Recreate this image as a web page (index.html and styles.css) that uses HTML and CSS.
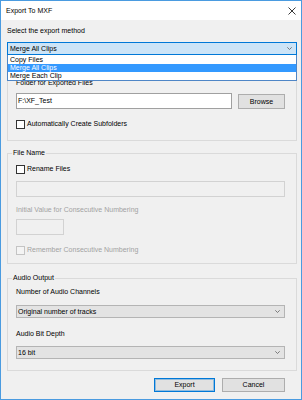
FILE: index.html
```html
<!DOCTYPE html>
<html>
<head>
<meta charset="utf-8">
<link rel="stylesheet" href="styles.css">
</head>
<body>
<div class="window">
  <div class="titlebar">
    <span class="title">Export To MXF</span>
    <svg class="close" viewBox="0 0 8 8"><path d="M0.5 0.5 L7.5 7.5 M7.5 0.5 L0.5 7.5" stroke="#222" stroke-width="0.9" fill="none"/></svg>
  </div>
  <div class="body">
    <div class="lbl">Select the export method</div>
    <div class="combo-wrap">
      <div class="combo active"><span>Merge All Clips</span><svg class="chev" viewBox="0 0 5 3"><path d="M0.3 0.3 L2.5 2.5 L4.7 0.3" stroke="#606060" stroke-width="0.8" fill="none"/></svg></div>
      <ul class="droplist">
        <li>Copy Files</li>
        <li class="sel">Merge All Clips</li>
        <li>Merge Each Clip</li>
      </ul>
    </div>
    <fieldset class="group g1">
      <div class="lbl">Folder for Exported Files</div>
      <div class="row folder-row">
        <div class="input folder-input">F:\XF_Test</div>
        <div class="btn browse">Browse</div>
      </div>
      <div class="check mt10"><span class="box"></span><span>Automatically Create Subfolders</span></div>
    </fieldset>
    <fieldset class="group g2">
      <legend>File Name</legend>
      <div class="check"><span class="box"></span><span>Rename Files</span></div>
      <div class="input disabled mt7"></div>
      <div class="lbl dim mt8">Initial Value for Consecutive Numbering</div>
      <div class="input disabled small mt4"></div>
      <div class="check dim mt10"><span class="box off"></span><span>Remember Consecutive Numbering</span></div>
    </fieldset>
    <fieldset class="group g3">
      <legend>Audio Output</legend>
      <div class="lbl">Number of Audio Channels</div>
      <div class="combo inner mt8"><span>Original number of tracks</span><svg class="chev" viewBox="0 0 5 3"><path d="M0.3 0.3 L2.5 2.5 L4.7 0.3" stroke="#606060" stroke-width="0.8" fill="none"/></svg></div>
      <div class="lbl mt11">Audio Bit Depth</div>
      <div class="combo inner mt7"><span>16 bit</span><svg class="chev" viewBox="0 0 5 3"><path d="M0.3 0.3 L2.5 2.5 L4.7 0.3" stroke="#606060" stroke-width="0.8" fill="none"/></svg></div>
    </fieldset>
    <div class="actions">
      <div class="btn export">Export</div>
      <div class="btn cancel">Cancel</div>
    </div>
  </div>
</div>
</body>
</html>
```
FILE: styles.css
```css
* { box-sizing: border-box; margin: 0; padding: 0; }
body { margin: 0; font-family: "Liberation Sans", Arial, sans-serif; font-size: 7px; color: #000; background: #fff; }
.window { width: 302px; height: 400px; border: 1px solid #4a9be0; background: #f0f0f0; display: flex; flex-direction: column; }
.titlebar { height: 19px; flex: none; background: #fff; display: flex; align-items: center; justify-content: space-between; padding: 0 5px; line-height: 10px; }
.close { width: 8px; height: 8px; display: block; }
.body { padding: 6px 4px 0 6px; }
.lbl { line-height: 10px; height: 10px; white-space: nowrap; }
.dim { color: #a2a2a2; }
.mt4 { margin-top: 4px; }
.mt7 { margin-top: 7px; }
.mt8 { margin-top: 8px; }
.mt10 { margin-top: 10px; }
.mt11 { margin-top: 11px; }
.combo-wrap { position: relative; margin-top: 6px; }
.combo { height: 13px; display: flex; align-items: center; justify-content: space-between; padding: 0 4px 0 2px; border: 1px solid #b4b4b4; background: #e3e3e3; line-height: 10px; white-space: nowrap; }
.combo.active { border-color: #0078d7; background: #cce4f7; }
.combo.inner { padding-left: 1px; padding-right: 4px; }
.chev { width: 5px; height: 3px; display: block; }
.droplist { position: absolute; left: 0; right: 0; top: 13px; background: #fff; border: 1px solid #4f86c6; border-top: none; list-style: none; padding-top: 1px; z-index: 2; }
.droplist li { height: 8px; line-height: 8px; padding-left: 2px; white-space: nowrap; }
.droplist li.sel { background: #3399ff; color: #fff; }
.group { border: 1px solid #dadada; padding: 0 11px 0 8px; min-inline-size: 0; }
.g1 { margin-top: 9px; padding-top: 13px; padding-bottom: 11px; }
.g2 { margin-top: 7px; padding-top: 6px; padding-bottom: 8px; }
.g3 { margin-top: 9px; padding-top: 4px; padding-bottom: 11px; }
legend { line-height: 10px; height: 10px; padding: 0 1px; margin-left: -4px; white-space: nowrap; }
.row { display: flex; }
.folder-row { margin-top: 5px; gap: 6px; align-items: flex-end; }
.input { height: 16px; border: 1px solid #a0a0a0; background: #fff; line-height: 14px; padding-left: 1px; white-space: nowrap; }
.input.disabled { border-color: #d2d2d2; background: #f0f0f0; }
.input.small { width: 48px; }
.folder-input { width: 216px; }
.btn { height: 15px; border: 1px solid #adadad; background: #e1e1e1; text-align: center; line-height: 13px; white-space: nowrap; }
.browse { width: 47px; }
.check { display: flex; align-items: center; height: 10px; line-height: 10px; white-space: nowrap; }
.box { width: 9px; height: 9px; border: 1px solid #333; background: #fff; margin-right: 2px; flex: none; }
.box.off { border-color: #c4c4c4; background: #f4f4f4; }
.actions { display: flex; justify-content: flex-end; gap: 7px; margin-top: 7px; padding-right: 12px; }
.export { width: 61px; height: 14px; line-height: 12px; border-color: #0078d7; box-shadow: inset 0 0 0 1px rgba(0, 120, 215, 0.35); }
.cancel { width: 63px; height: 14px; line-height: 12px; }
```
